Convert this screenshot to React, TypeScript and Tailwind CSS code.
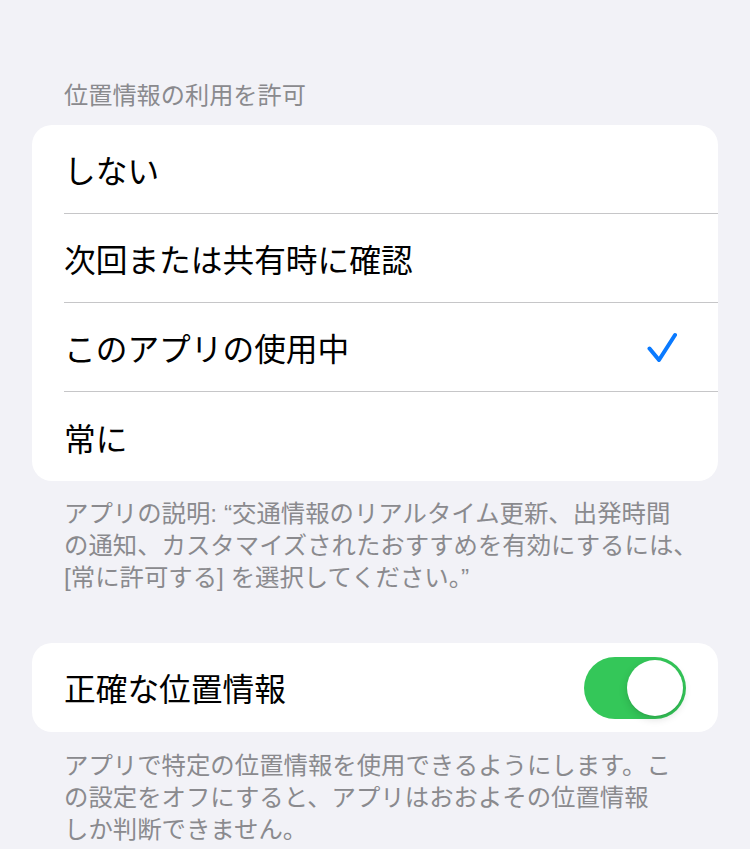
import React from "react";

const rows = ["しない", "次回または共有時に確認", "このアプリの使用中", "常に"];

export default function App() {
  return (
    <div className="min-h-screen bg-[#f2f2f7] pt-[80px] font-['Liberation_Sans','Noto_Sans_CJK_JP',sans-serif]">
      <div className="px-16 text-[24.2px] leading-[32px] text-[#8a8a8e] whitespace-nowrap">
        位置情報の利用を許可
      </div>
      <div className="mt-[13px] mx-8 rounded-[20px] bg-white overflow-hidden">
        {rows.map((r, i) => (
          <div key={r} className="pl-8">
            <div
              className={
                i < rows.length - 1
                  ? "h-[89px] flex items-center justify-between border-b border-[#c6c6c8] pr-[41px]"
                  : "h-[89px] flex items-center justify-between pr-[41px]"
              }
            >
              <span className="pt-[8px] text-[31.7px] leading-none text-black whitespace-nowrap">{r}</span>
              {i === 2 && (
                <svg width="30" height="31" viewBox="0 0 30 31" fill="none">
                  <path
                    d="M2.5 16.5 L12 28 L28 3"
                    stroke="#0a7aff"
                    strokeWidth="4"
                    strokeLinecap="round"
                    strokeLinejoin="round"
                  />
                </svg>
              )}
            </div>
          </div>
        ))}
      </div>
      <div className="px-16 pt-[17px] text-[24.4px] leading-[32px] text-[#8a8a8e] whitespace-nowrap">
        <div>アプリの説明: “交通情報のリアルタイム更新、出発時間</div>
        <div>の通知、カスタマイズされたおすすめを有効にするには、</div>
        <div>[常に許可する] を選択してください。”</div>
      </div>
      <div className="mt-[49px] mx-8 rounded-[20px] bg-white h-[89px] flex items-center justify-between pl-8 pr-8">
        <span className="pt-[6px] text-[31.7px] leading-none text-black whitespace-nowrap">正確な位置情報</span>
        <div className="w-[102px] h-[62px] rounded-full bg-[#34c759] flex items-center justify-end pr-[3px]">
          <div className="w-[56px] h-[56px] rounded-full bg-white shadow-[0_3px_8px_rgba(0,0,0,0.15),0_1px_1px_rgba(0,0,0,0.06)]" />
        </div>
      </div>
      <div className="px-16 pt-[18px] text-[24.4px] leading-[32px] text-[#8a8a8e] whitespace-nowrap">
        <div>アプリで特定の位置情報を使用できるようにします。こ</div>
        <div>の設定をオフにすると、アプリはおおよその位置情報</div>
        <div>しか判断できません。</div>
      </div>
    </div>
  );
}
